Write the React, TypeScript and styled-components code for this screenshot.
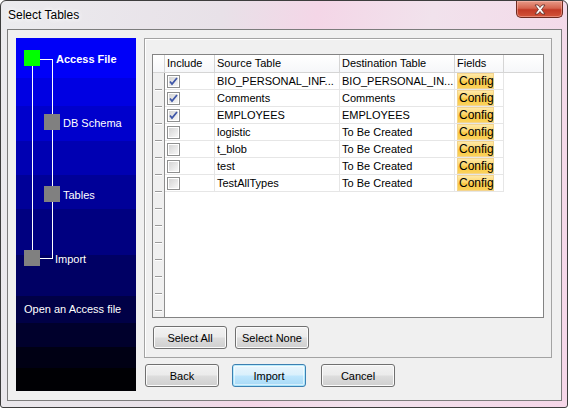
import React from "react";
import styled, { createGlobalStyle, css } from "styled-components";

const GlobalStyle = createGlobalStyle`
  body {
    margin: 0;
    font-family: "Liberation Sans", Arial, sans-serif;
    font-size: 11px;
  }
`;

// blue gradient in the wizard panel is drawn in hard bands
const bands: [number, string][] = [
  [40, "#0000f8"],
  [68, "#0000e2"],
  [103, "#0000cc"],
  [137, "#0000b2"],
  [171, "#000098"],
  [217, "#000080"],
  [258, "#000064"],
  [285, "#000046"],
  [309, "#00002c"],
  [330, "#000014"],
  [353, "#000004"],
];
const bandGradient = (() => {
  let prev = 0;
  const stops = bands.map(([end, c]) => {
    const s = `${c} ${prev}px, ${c} ${end}px`;
    prev = end;
    return s;
  });
  return `linear-gradient(to bottom, ${stops.join(", ")})`;
})();

const Window = styled.div`
  width: 568px;
  height: 408px;
  box-sizing: border-box;
  border: 1px solid #3d3d3d;
  border-radius: 6px 6px 3px 3px;
  background: linear-gradient(100deg, #ebebee 0%, #e8e1e8 35%, #f4d6e7 50%, #f1e2ec 68%, #f5d6e8 100%);
  display: flex;
  flex-direction: column;
  overflow: hidden;
`;

const TitleBar = styled.div`
  height: 28px;
  display: flex;
  justify-content: space-between;
  align-items: flex-start;
  padding: 0 4px 0 7px;
`;

const Title = styled.div`
  margin-top: 7px;
  font-size: 12px;
  color: #000;
  text-shadow: 0 0 6px #fff, 0 0 10px #fff, 0 0 3px #fff;
`;

const CloseButton = styled.div`
  width: 47px;
  height: 17px;
  box-sizing: border-box;
  border: 1px solid #6e2a20;
  border-top: none;
  border-radius: 0 0 5px 5px;
  background: linear-gradient(to bottom, #e79a88 0%, #d5654f 45%, #c23a26 55%, #d2543a 100%);
  box-shadow: inset 0 0 0 1px rgba(255, 200, 190, 0.45);
  display: flex;
  align-items: center;
  justify-content: center;
`;

const Client = styled.div`
  margin-left: 6px;
  width: 555px;
  height: 372px;
  box-sizing: border-box;
  border: 1px solid #7c7c7c;
  background: #f0f0f0;
  padding: 8px;
  display: flex;
  gap: 8px;
`;

const StepPanel = styled.div`
  width: 120px;
  height: 353px;
  flex-shrink: 0;
  background: ${bandGradient};
  color: #fff;
  display: flex;
  flex-direction: column;
`;

const Diagram = styled.div`
  position: relative;
  height: 264px;
`;

const Node = styled.div<{ $left: number; $top: number; $active?: boolean }>`
  position: absolute;
  left: ${(p) => p.$left}px;
  top: ${(p) => p.$top}px;
  width: 16px;
  height: 16px;
  background: ${(p) => (p.$active ? "#00ff00" : "#808080")};
`;

const Wire = styled.div<{ $left: number; $top: number; $w?: number; $h?: number }>`
  position: absolute;
  left: ${(p) => p.$left}px;
  top: ${(p) => p.$top}px;
  width: ${(p) => p.$w ?? 1}px;
  height: ${(p) => p.$h ?? 1}px;
  background: #fff;
`;

const StepLabel = styled.div<{ $left: number; $top: number; $bold?: boolean }>`
  position: absolute;
  left: ${(p) => p.$left}px;
  top: ${(p) => p.$top}px;
  line-height: 14px;
  white-space: nowrap;
  font-weight: ${(p) => (p.$bold ? "bold" : "normal")};
`;

const Description = styled.div`
  padding-left: 8px;
  line-height: 14px;
`;

const MainColumn = styled.div`
  width: 408px;
  display: flex;
  flex-direction: column;
  gap: 6px;
`;

const GroupBox = styled.div`
  height: 320px;
  box-sizing: border-box;
  border: 1px solid #a3a3a3;
  box-shadow: inset 1px 1px 0 #fff;
  padding: 15px 7px 0 7px;
  display: flex;
  flex-direction: column;
`;

const Grid = styled.div`
  width: 392px;
  height: 264px;
  box-sizing: border-box;
  border: 1px solid #838383;
  background: #fff;
  display: flex;
  flex-direction: column;
  overflow: hidden;
`;

const columns = "12px 50px 125px 115px 49px 1fr";

const HeaderRow = styled.div`
  height: 18px;
  flex-shrink: 0;
  display: grid;
  grid-template-columns: ${columns};
  background: linear-gradient(to bottom, #ffffff, #f6f7f9);
  border-bottom: 1px solid #d5d5d5;
  box-sizing: border-box;
`;

const HeaderCell = styled.div<{ $last?: boolean }>`
  box-sizing: border-box;
  padding-left: 2px;
  line-height: 17px;
  white-space: nowrap;
  overflow: hidden;
  ${(p) =>
    !p.$last &&
    css`
      border-right: 1px solid #d5d5d5;
    `}
`;

const CornerCell = styled.div`
  box-sizing: border-box;
  border-right: 1px solid #d5d5d5;
`;

const Body = styled.div`
  flex: 1;
  display: flex;
  overflow: hidden;
`;

const RowHeads = styled.div`
  width: 12px;
  flex-shrink: 0;
  box-sizing: border-box;
  background: #f0f0f0;
  border-right: 1px solid #8f8f8f;
  display: flex;
  flex-direction: column;
`;

const RowHead = styled.div`
  height: 17px;
  flex-shrink: 0;
  position: relative;
  &::after {
    content: "";
    position: absolute;
    left: 2px;
    right: 2px;
    bottom: 0;
    height: 1px;
    background: #9a9a9a;
    box-shadow: 0 1px 0 #fff;
  }
`;

const Rows = styled.div`
  display: flex;
  flex-direction: column;
`;

const DataRow = styled.div`
  height: 17px;
  display: grid;
  grid-template-columns: 50px 125px 115px 49px;
`;

const Cell = styled.div`
  box-sizing: border-box;
  border-right: 1px solid #e6e6e6;
  border-bottom: 1px solid #e6e6e6;
  padding-left: 2px;
  line-height: 16px;
  white-space: nowrap;
  overflow: hidden;
  display: flex;
  align-items: center;
`;

const ConfigTag = styled.div`
  width: 37px;
  height: 16px;
  box-sizing: border-box;
  border: 1px solid #f3d48e;
  background: linear-gradient(to bottom, #ffe9a8 0%, #fdd66a 45%, #f9c843 55%, #fbd35c 100%);
  font-size: 12px;
  line-height: 14px;
  padding-left: 1px;
  color: #000;
  white-space: nowrap;
`;

const ButtonRow = styled.div<{ $gaps: number[] }>`
  display: flex;
  padding-left: 1px;
  & > :nth-child(2) {
    margin-left: ${(p) => p.$gaps[0]}px;
  }
  & > :nth-child(3) {
    margin-left: ${(p) => p.$gaps[1] ?? 0}px;
  }
`;

const GroupButtons = styled(ButtonRow)`
  margin-top: 8px;
`;

const Button = styled.div<{ $default?: boolean }>`
  width: 74px;
  height: 23px;
  box-sizing: border-box;
  border: 1px solid #707070;
  border-radius: 3px;
  background: linear-gradient(to bottom, #f2f2f2 0%, #ebebeb 48%, #dddddd 52%, #cfcfcf 100%);
  box-shadow: inset 0 0 0 1px #fbfbfb;
  display: flex;
  align-items: center;
  justify-content: center;
  color: #000;
  ${(p) =>
    p.$default &&
    css`
      border-color: #3c7fb1;
      background: linear-gradient(to bottom, #eaf6fd 0%, #d9f0fc 48%, #bee6fd 52%, #a7d9f5 100%);
      box-shadow: inset 0 0 0 1px #48d2fb55, inset 0 0 0 2px #ffffff88;
    `}
`;

function Checkbox({ checked }: { checked: boolean }) {
  return (
    <svg width="13" height="13" viewBox="0 0 13 13">
      <defs>
        <linearGradient id="cbg" x1="0" y1="0" x2="1" y2="1">
          <stop offset="0" stopColor="#d4d4d4" />
          <stop offset="1" stopColor="#f7f7f7" />
        </linearGradient>
      </defs>
      <rect x="0.5" y="0.5" width="12" height="12" fill="#fff" stroke="#8e8f8f" />
      <rect x="2" y="2" width="9" height="9" fill="url(#cbg)" />
      {checked && (
        <path d="M3 6.5 L5 9 L10 3" fill="none" stroke="#3f57a8" strokeWidth="1.8" />
      )}
    </svg>
  );
}

const steps = [
  { left: 8, top: 12, label: "Access File", lx: 40, ly: 14, active: true },
  { left: 28, top: 76, label: "DB Schema", lx: 47, ly: 78 },
  { left: 28, top: 148, label: "Tables", lx: 47, ly: 150 },
  { left: 8, top: 212, label: "Import", lx: 39, ly: 214 },
];

const tables = [
  { src: "BIO_PERSONAL_INF...", dst: "BIO_PERSONAL_IN...", on: true },
  { src: "Comments", dst: "Comments", on: true },
  { src: "EMPLOYEES", dst: "EMPLOYEES", on: true },
  { src: "logistic", dst: "To Be Created", on: false },
  { src: "t_blob", dst: "To Be Created", on: false },
  { src: "test", dst: "To Be Created", on: false },
  { src: "TestAllTypes", dst: "To Be Created", on: false },
];

export default function App() {
  return (
    <>
      <GlobalStyle />
      <Window>
        <TitleBar>
          <Title>Select Tables</Title>
          <CloseButton>
            <svg width="14" height="11" viewBox="0 0 14 11">
              <path
                d="M2 1 L5 1 L7 3.5 L9 1 L12 1 L8.6 5.5 L12 10 L9 10 L7 7.5 L5 10 L2 10 L5.4 5.5 Z"
                fill="#fff"
                stroke="#5a2a24"
                strokeWidth="0.8"
                strokeLinejoin="round"
              />
            </svg>
          </CloseButton>
        </TitleBar>
        <Client>
          <StepPanel>
            <Diagram>
              <Wire $left={24} $top={21} $w={13} />
              <Wire $left={36} $top={21} $h={200} />
              <Wire $left={16} $top={28} $h={184} />
              <Wire $left={24} $top={220} $w={13} />
              {steps.map((s) => (
                <React.Fragment key={s.label}>
                  <Node $left={s.left} $top={s.top} $active={s.active} />
                  <StepLabel $left={s.lx} $top={s.ly} $bold={s.active}>
                    {s.label}
                  </StepLabel>
                </React.Fragment>
              ))}
            </Diagram>
            <Description>Open an Access file</Description>
          </StepPanel>
          <MainColumn>
            <GroupBox>
              <Grid>
                <HeaderRow>
                  <CornerCell />
                  <HeaderCell>Include</HeaderCell>
                  <HeaderCell>Source Table</HeaderCell>
                  <HeaderCell>Destination Table</HeaderCell>
                  <HeaderCell>Fields</HeaderCell>
                  <HeaderCell $last />
                </HeaderRow>
                <Body>
                  <RowHeads>
                    {Array.from({ length: 15 }, (_, i) => (
                      <RowHead key={i} />
                    ))}
                  </RowHeads>
                  <Rows>
                    {tables.map((t) => (
                      <DataRow key={t.src}>
                        <Cell>
                          <Checkbox checked={t.on} />
                        </Cell>
                        <Cell>{t.src}</Cell>
                        <Cell>{t.dst}</Cell>
                        <Cell>
                          <ConfigTag>Config</ConfigTag>
                        </Cell>
                      </DataRow>
                    ))}
                  </Rows>
                </Body>
              </Grid>
              <GroupButtons $gaps={[8]}>
                <Button>Select All</Button>
                <Button>Select None</Button>
              </GroupButtons>
            </GroupBox>
            <ButtonRow $gaps={[13, 15]}>
              <Button>Back</Button>
              <Button $default>Import</Button>
              <Button>Cancel</Button>
            </ButtonRow>
          </MainColumn>
        </Client>
      </Window>
    </>
  );
}
